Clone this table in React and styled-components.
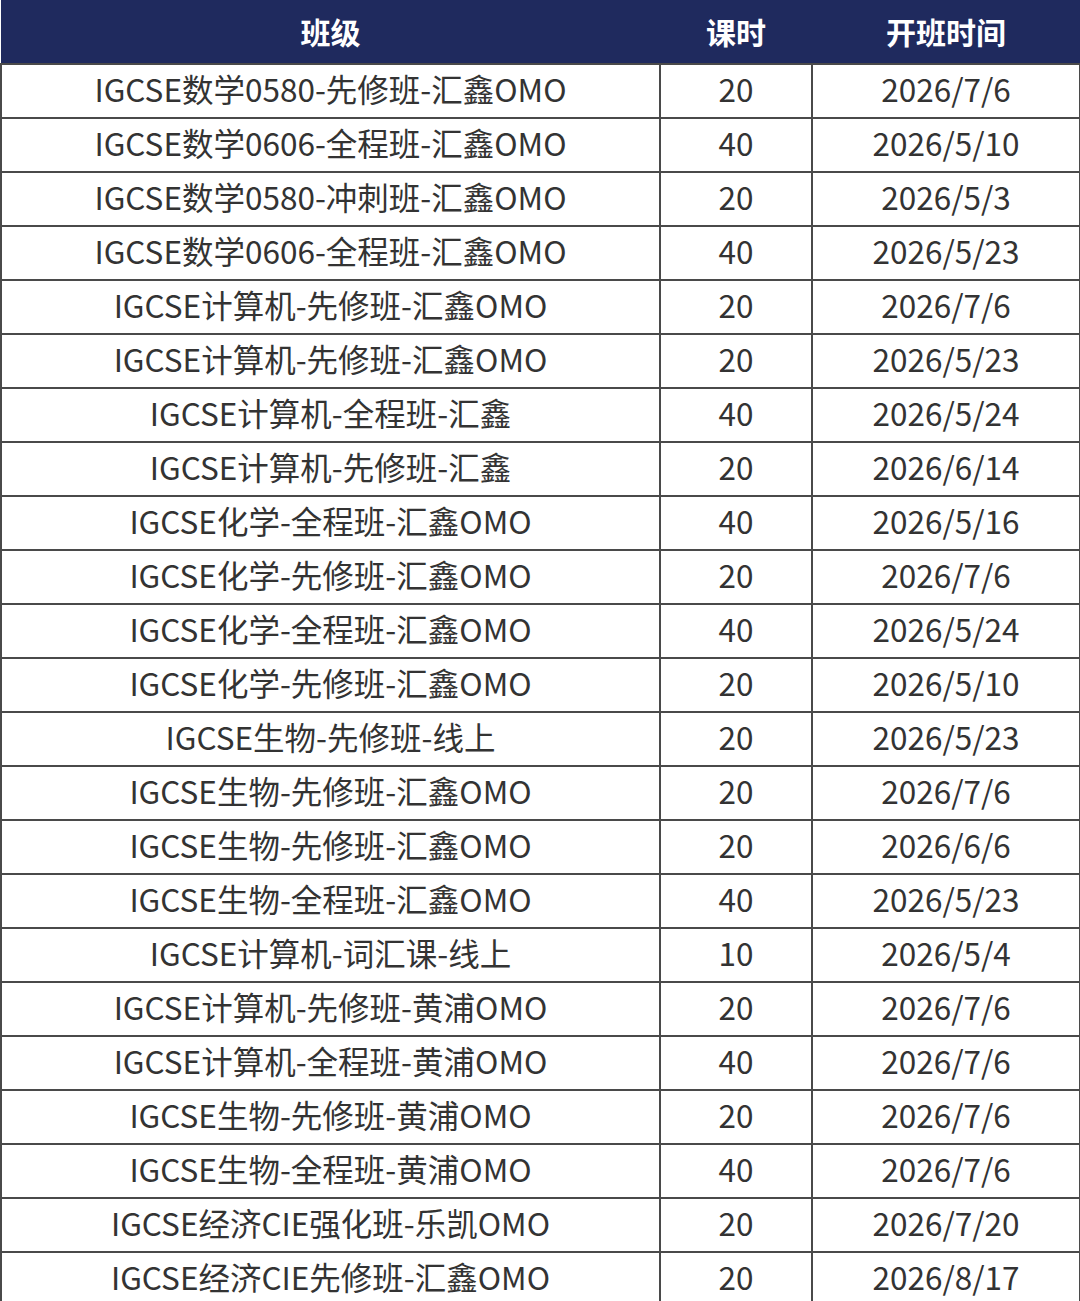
import styled, { createGlobalStyle } from "styled-components";

const GlobalStyle = createGlobalStyle`
  html, body {
    margin: 0;
    padding: 0;
    background: #fff;
  }
  body {
    font-family: "Noto Sans CJK SC", "Noto Sans", sans-serif;
  }
`;

const rows = [
  ["IGCSE数学0580-先修班-汇鑫OMO", "20", "2026/7/6"],
  ["IGCSE数学0606-全程班-汇鑫OMO", "40", "2026/5/10"],
  ["IGCSE数学0580-冲刺班-汇鑫OMO", "20", "2026/5/3"],
  ["IGCSE数学0606-全程班-汇鑫OMO", "40", "2026/5/23"],
  ["IGCSE计算机-先修班-汇鑫OMO", "20", "2026/7/6"],
  ["IGCSE计算机-先修班-汇鑫OMO", "20", "2026/5/23"],
  ["IGCSE计算机-全程班-汇鑫", "40", "2026/5/24"],
  ["IGCSE计算机-先修班-汇鑫", "20", "2026/6/14"],
  ["IGCSE化学-全程班-汇鑫OMO", "40", "2026/5/16"],
  ["IGCSE化学-先修班-汇鑫OMO", "20", "2026/7/6"],
  ["IGCSE化学-全程班-汇鑫OMO", "40", "2026/5/24"],
  ["IGCSE化学-先修班-汇鑫OMO", "20", "2026/5/10"],
  ["IGCSE生物-先修班-线上", "20", "2026/5/23"],
  ["IGCSE生物-先修班-汇鑫OMO", "20", "2026/7/6"],
  ["IGCSE生物-先修班-汇鑫OMO", "20", "2026/6/6"],
  ["IGCSE生物-全程班-汇鑫OMO", "40", "2026/5/23"],
  ["IGCSE计算机-词汇课-线上", "10", "2026/5/4"],
  ["IGCSE计算机-先修班-黄浦OMO", "20", "2026/7/6"],
  ["IGCSE计算机-全程班-黄浦OMO", "40", "2026/7/6"],
  ["IGCSE生物-先修班-黄浦OMO", "20", "2026/7/6"],
  ["IGCSE生物-全程班-黄浦OMO", "40", "2026/7/6"],
  ["IGCSE经济CIE强化班-乐凯OMO", "20", "2026/7/20"],
  ["IGCSE经济CIE先修班-汇鑫OMO", "20", "2026/8/17"],
];

const Page = styled.div`
  width: 1080px;
  height: 1301px;
  overflow: hidden;
  background: #fff;
`;

const Table = styled.table`
  width: 1079px;
  border-collapse: collapse;
  table-layout: fixed;
`;

const HeadCell = styled.th`
  height: 61px;
  padding: 0 0 2px;
  background: #1f2a5e;
  color: #fff;
  font-size: 30px;
  font-weight: 700;
  text-align: center;
  vertical-align: middle;
  width: ${(p) => p.$w}px;
`;

const Cell = styled.td`
  height: 48px;
  padding: 0 0 4px;
  border: 2px solid #4a4a4a;
  color: #333;
  font-size: 31.5px;
  line-height: 1;
  text-align: center;
  vertical-align: middle;
  white-space: nowrap;
`;

const App = () => {
  return (
    <Page>
      <GlobalStyle />
      <Table>
        <thead>
          <tr>
            <HeadCell $w={659}>班级</HeadCell>
            <HeadCell $w={152}>课时</HeadCell>
            <HeadCell $w={268}>开班时间</HeadCell>
          </tr>
        </thead>
        <tbody>
          {rows.map(([name, hours, date], i) => (
            <tr key={i}>
              <Cell>{name}</Cell>
              <Cell>{hours}</Cell>
              <Cell>{date}</Cell>
            </tr>
          ))}
        </tbody>
      </Table>
    </Page>
  );
};

export default App;
